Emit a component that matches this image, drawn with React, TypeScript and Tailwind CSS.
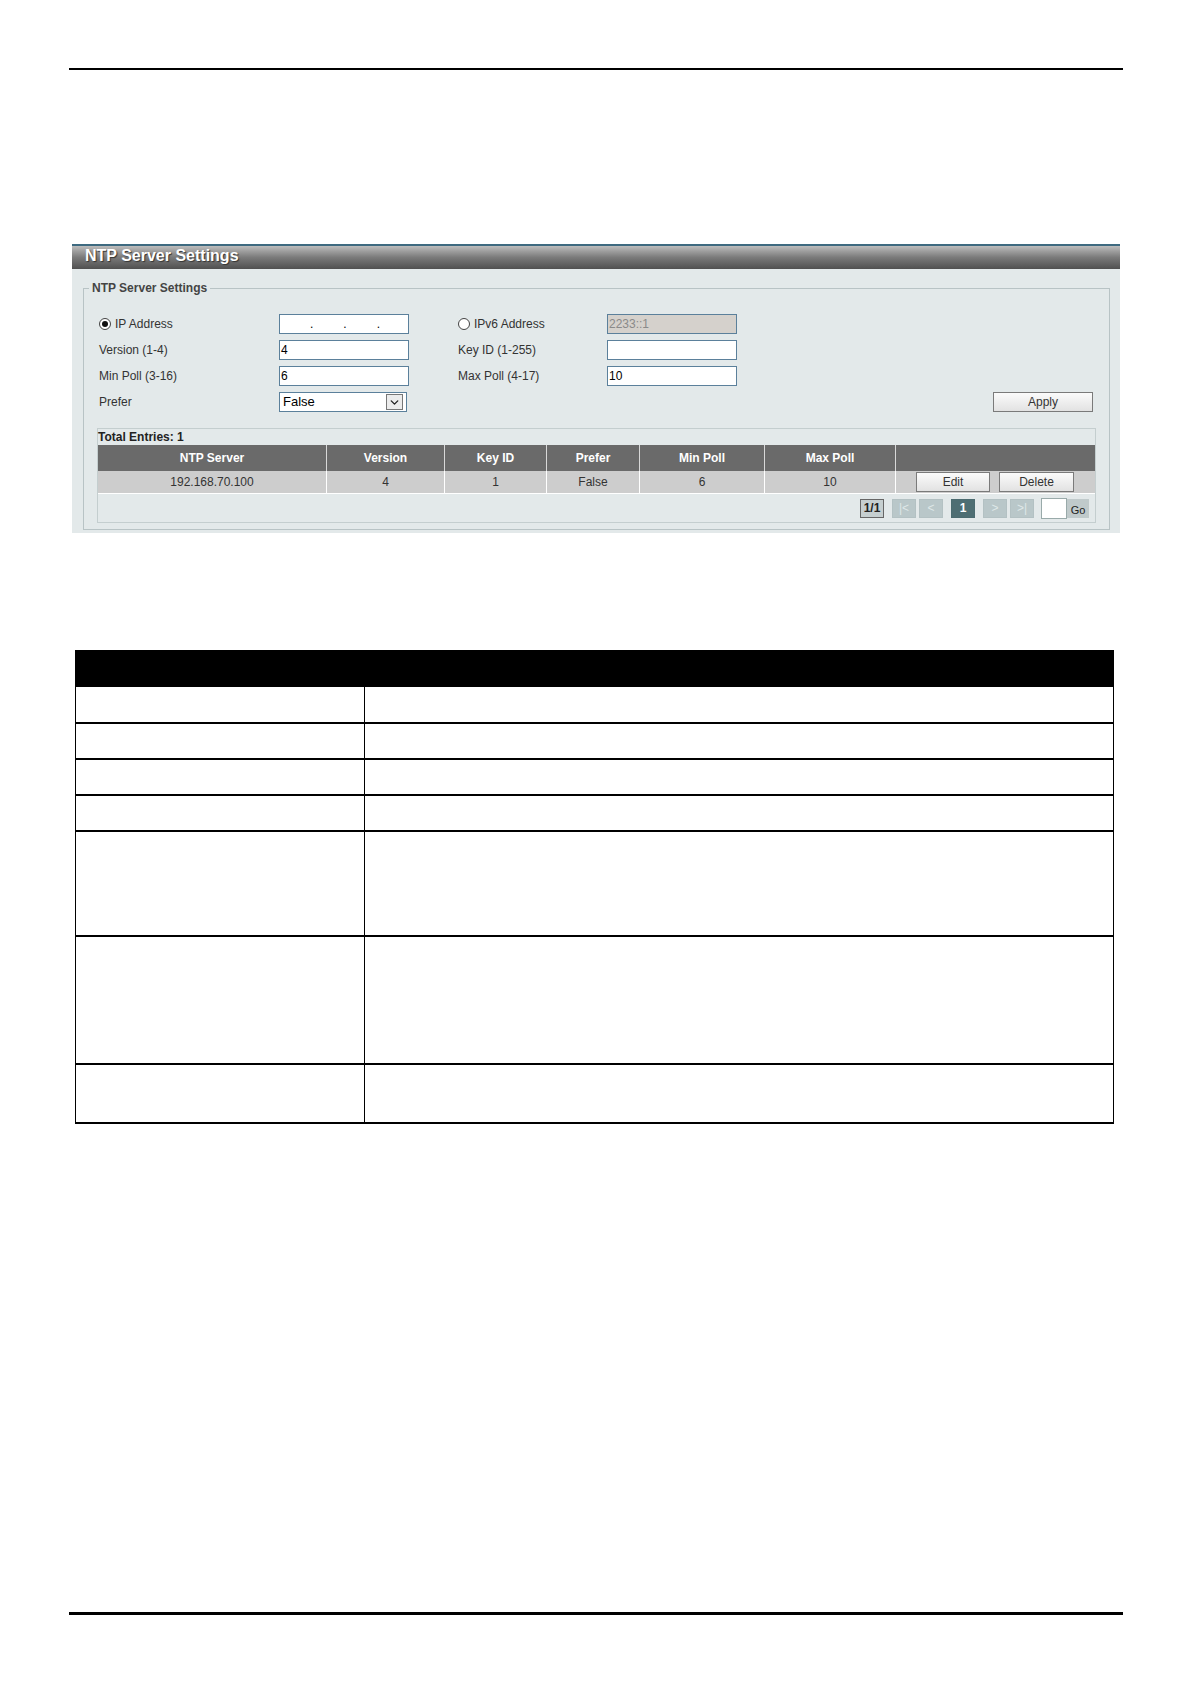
import React from "react";
import { ChevronDown } from "lucide-react";

const inputCls =
  "h-[20px] w-[130px] border border-[#5b809b] bg-white px-[1px] text-[12px] leading-[18px] text-black";

function Radio({ checked }: { checked?: boolean }) {
  return (
    <span className="flex h-[12px] w-[12px] items-center justify-center rounded-full border border-[#444] bg-white">
      {checked && <span className="h-[6px] w-[6px] rounded-full bg-[#111]" />}
    </span>
  );
}

function GrayButton({ label, className }: { label: string; className: string }) {
  return (
    <div
      className={`flex items-center justify-center border border-[#7a7a7a] bg-gradient-to-b from-[#fbfbfb] to-[#e2e2e2] text-[12px] text-[#333] ${className}`}
    >
      {label}
    </div>
  );
}

function PageBox({ label, kind }: { label: string; kind: "info" | "off" | "on" }) {
  const look =
    kind === "info"
      ? "border-[#666] bg-[#c6cfd0] text-[#222] font-bold"
      : kind === "on"
      ? "border-[#4b6b70] bg-[#4e6e73] text-white font-bold"
      : "border-[#b3c1c3] bg-[#b9c7c9] text-[#dfe7e8]";
  return (
    <div className={`flex h-[19px] w-[24px] items-center justify-center border text-[12px] ${look}`}>
      {label}
    </div>
  );
}

const columns = [
  { name: "NTP Server", w: "w-[229px]", value: "192.168.70.100" },
  { name: "Version", w: "w-[118px]", value: "4" },
  { name: "Key ID", w: "w-[102px]", value: "1" },
  { name: "Prefer", w: "w-[93px]", value: "False" },
  { name: "Min Poll", w: "w-[125px]", value: "6" },
  { name: "Max Poll", w: "w-[131px]", value: "10" },
];

const rowHeights = ["h-[35px]", "h-[36px]", "h-[36px]", "h-[36px]", "h-[105px]", "h-[128px]", "h-[59px]"];

export default function App() {
  return (
    <div className="flex h-[1683px] w-[1191px] flex-col bg-white pl-[69px] font-['Liberation_Sans',Arial,sans-serif]">
      <div className="mt-[68px] h-[2px] w-[1054px] bg-black" />

      {/* Web UI panel */}
      <div className="ml-[3px] mt-[174px] flex h-[289px] w-[1048px] flex-col bg-[#e3e9ea]">
        <div className="flex h-[25px] items-center border-t-2 border-[#3e6a80] bg-gradient-to-b from-[#bdbdbd] via-[#7a7a7a] to-[#505050] pb-[3px] pl-[13px]">
          <span className="text-[16px] font-bold leading-[18px] text-white [text-shadow:1px_1px_1px_#333]">
            NTP Server Settings
          </span>
        </div>

        <fieldset className="ml-[11px] mt-[10px] h-[251px] w-[1027px] border border-[#b8c3c5] px-[13px]">
          <legend className="-ml-[8px] px-[3px] text-[12px] font-bold text-[#444]">NTP Server Settings</legend>

          <div className="mt-[17px] flex flex-col gap-[6px] pl-[2px] text-[12px] text-[#333]">
            <div className="flex h-[20px] items-center">
              <div className="flex w-[180px] items-center gap-[4px]">
                <Radio checked />
                <span>IP Address</span>
              </div>
              <div className={`${inputCls} flex items-center pl-[30px] gap-[30px] text-[10px]`}>
                <span>.</span>
                <span>.</span>
                <span>.</span>
              </div>
              <div className="ml-[49px] flex w-[149px] items-center gap-[4px]">
                <Radio />
                <span>IPv6 Address</span>
              </div>
              <div className="h-[20px] w-[130px] border border-[#5b809b] bg-[#d5d1cc] px-[1px] text-[12px] leading-[18px] text-[#8a8a8a]">
                2233::1
              </div>
            </div>

            <div className="flex h-[20px] items-center">
              <span className="w-[180px]">Version (1-4)</span>
              <div className={inputCls}>4</div>
              <span className="ml-[49px] w-[149px]">Key ID (1-255)</span>
              <div className={inputCls} />
            </div>

            <div className="flex h-[20px] items-center">
              <span className="w-[180px]">Min Poll (3-16)</span>
              <div className={inputCls}>6</div>
              <span className="ml-[49px] w-[149px]">Max Poll (4-17)</span>
              <div className={inputCls}>10</div>
            </div>

            <div className="flex h-[20px] items-center">
              <span className="w-[180px]">Prefer</span>
              <div className="flex h-[20px] w-[128px] items-center justify-between border border-[#5b809b] bg-white pl-[3px] pr-[3px] text-[13px] text-black">
                <span>False</span>
                <span className="flex h-[16px] w-[17px] items-center justify-center border border-[#777] bg-[#ececec]">
                  <ChevronDown size={13} strokeWidth={2.5} className="text-[#222]" />
                </span>
              </div>
              <GrayButton label="Apply" className="ml-auto mr-[3px] h-[20px] w-[100px]" />
            </div>
          </div>

          {/* entries */}
          <div className="mt-[16px] flex w-[999px] flex-col border border-[#c4cecf]">
            <div className="h-[16px] text-[12px] font-bold leading-[16px] text-[#222]">Total Entries: 1</div>
            <div className="flex h-[26px] bg-[#6a6a6a] text-[12px] font-bold text-white">
              {columns.map((c) => (
                <div key={c.name} className={`${c.w} flex items-center justify-center border-r border-[#d8d8d8]`}>
                  {c.name}
                </div>
              ))}
              <div className="flex-1" />
            </div>
            <div className="flex h-[23px] border-b border-white bg-[#cdcdcd] text-[12px] text-[#333]">
              {columns.map((c) => (
                <div key={c.name} className={`${c.w} flex items-center justify-center border-r border-white`}>
                  {c.value}
                </div>
              ))}
              <div className="flex flex-1 items-center gap-[9px] pl-[20px]">
                <GrayButton label="Edit" className="h-[20px] w-[74px]" />
                <GrayButton label="Delete" className="h-[20px] w-[75px]" />
              </div>
            </div>
            <div className="flex h-[28px] items-center justify-end pr-[6px]">
              <PageBox label="1/1" kind="info" />
              <div className="ml-[8px] flex gap-[3px]">
                <PageBox label="|<" kind="off" />
                <PageBox label="<" kind="off" />
              </div>
              <div className="ml-[8px]">
                <PageBox label="1" kind="on" />
              </div>
              <div className="ml-[8px] flex gap-[3px]">
                <PageBox label=">" kind="off" />
                <PageBox label=">|" kind="off" />
              </div>
              <div className="ml-[7px] h-[21px] w-[26px] border border-[#9aa] bg-white" />
              <div className="flex h-[19px] w-[22px] items-end justify-center bg-[#c0cacb] text-[11px] leading-[15px] text-[#222]">
                Go
              </div>
            </div>
          </div>
        </fieldset>
      </div>

      {/* parameter table (text removed) */}
      <div className="ml-[6px] mt-[117px] flex w-[1039px] flex-col border-x border-b-2 border-black">
        <div className="h-[37px] bg-black" />
        {rowHeights.map((h, i) => (
          <div key={i} className={`flex ${h} ${i > 0 ? "border-t-2 border-black" : ""}`}>
            <div className="w-[289px] border-r border-black" />
            <div className="flex-1" />
          </div>
        ))}
      </div>

      <div className="mt-auto mb-[68px] h-[3px] w-[1054px] bg-black" />
    </div>
  );
}
